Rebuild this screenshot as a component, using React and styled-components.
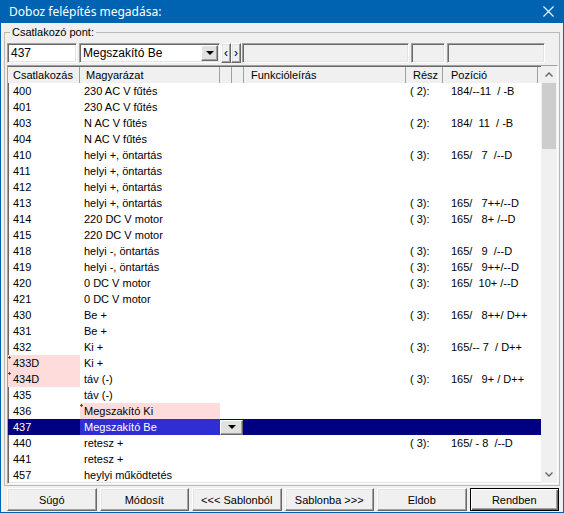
import styled, { createGlobalStyle } from "styled-components";

const GlobalStyle = createGlobalStyle`
  body {
    margin: 0;
    background: #f0f0f0;
  }
`;

const COLS = "72px 140px 12px 12px 162px 37px 95px";

const rows = [
  ["400", "230 AC V fűtés", "( 2):", "184/--11  / -B"],
  ["401", "230 AC V fűtés"],
  ["403", "N AC V fűtés", "( 2):", "184/  11  / -B"],
  ["404", "N AC V fűtés"],
  ["410", "helyi +, öntartás", "( 3):", "165/   7  /--D"],
  ["411", "helyi +, öntartás"],
  ["412", "helyi +, öntartás"],
  ["413", "helyi +, öntartás", "( 3):", "165/   7++/--D"],
  ["414", "220 DC V motor", "( 3):", "165/   8+ /--D"],
  ["415", "220 DC V motor"],
  ["418", "helyi -, öntartás", "( 3):", "165/   9  /--D"],
  ["419", "helyi -, öntartás", "( 3):", "165/   9++/--D"],
  ["420", "0 DC V motor", "( 3):", "165/  10+ /--D"],
  ["421", "0 DC V motor"],
  ["430", "Be +", "( 3):", "165/   8++/ D++"],
  ["431", "Be +"],
  ["432", "Ki +", "( 3):", "165/-- 7  / D++"],
  ["433D", "Ki +", "", "", { code: true }],
  ["434D", "táv (-)", "( 3):", "165/   9+ / D++", { code: true }],
  ["435", "táv (-)"],
  ["436", "Megszakító Ki", "", "", { name: true }],
  ["437", "Megszakító Be", "", "", { selected: true }],
  ["440", "retesz +", "( 3):", "165/ - 8  /--D"],
  ["441", "retesz +"],
  ["457", "heylyi működtetés"],
];

const Window = styled.div`
  width: 564px;
  height: 513px;
  box-sizing: border-box;
  border: 1px solid #0063b1;
  border-top: none;
  background: #f0f0f0;
  display: flex;
  flex-direction: column;
  font-family: "Liberation Sans", Arial, sans-serif;
  font-size: 11px;
  color: #000;
`;

const TitleBar = styled.div`
  height: 23px;
  margin: 0 -1px;
  background: #0063b1;
  color: #fff;
  display: flex;
  align-items: center;
  justify-content: space-between;
  padding: 0 10px 0 9px;
  font-family: "Noto Sans", "Liberation Sans", sans-serif;
  font-size: 12px;
`;

const Body = styled.div`
  flex: 1;
  display: flex;
  flex-direction: column;
  padding: 3px 3px 0 3px;
`;

const GroupBox = styled.fieldset`
  margin: 0;
  padding: 4px 1px 1px 2px;
  border: 1px solid #b9b9b9;
  min-width: 0;
`;

const Legend = styled.legend`
  margin-left: 3px;
  padding: 0 2px;
  line-height: 13px;
`;

const FieldRow = styled.div`
  display: flex;
  align-items: stretch;
  height: 20px;
  margin-bottom: 2px;
`;

const sunken = `
  box-sizing: border-box;
  border: 1px solid;
  border-color: #a0a0a0 #fff #fff #a0a0a0;
  box-shadow: inset 1px 1px 0 #696969, inset -1px -1px 0 #e3e3e3;
`;

const raised = `
  box-sizing: border-box;
  border: 1px solid;
  border-color: #fff #696969 #696969 #fff;
  box-shadow: inset -1px -1px 0 #a0a0a0, inset 1px 1px 0 #e3e3e3;
`;

const Field = styled.div`
  ${sunken}
  width: ${(p) => p.$w}px;
  margin-right: ${(p) => p.$gap ?? 2}px;
  background: ${(p) => (p.$blank ? "#f0f0f0" : "#fff")};
  display: flex;
  align-items: center;
  padding-left: 3px;
  font-size: 12px;
  position: relative;
`;

const ComboText = styled.span`
  flex: 1;
`;

const DropButton = styled.div`
  ${raised}
  width: ${(p) => p.$w || 17}px;
  height: ${(p) => p.$h || 16}px;
  background: #e1e1e1;
  display: flex;
  align-items: center;
  justify-content: center;
  margin-right: ${(p) => p.$mr ?? 1}px;
`;

const Arrow = styled.span`
  width: 0;
  height: 0;
  border-left: 4px solid transparent;
  border-right: 4px solid transparent;
  border-top: 4px solid #000;
`;

const NavButton = styled.div`
  ${raised}
  width: 10px;
  background: #f0f0f0;
  display: flex;
  align-items: center;
  justify-content: center;
  font-size: 12px;
  margin-right: ${(p) => p.$mr || 0}px;
`;

const Grid = styled.div`
  ${sunken}
  height: 419px;
  display: flex;
  background: #fff;
  overflow: hidden;
`;

const Table = styled.div`
  flex: 1;
  display: flex;
  flex-direction: column;
  overflow: hidden;
  padding-top: 1px;
`;

const HeaderRow = styled.div`
  display: grid;
  grid-template-columns: ${COLS};
  height: 16px;
  background: #f0f0f0;
`;

const HeadCell = styled.div`
  border-right: 1px solid #a0a0a0;
  padding-left: ${(p) => p.$pad || 5}px;
  line-height: 16px;
  white-space: nowrap;
  overflow: hidden;
`;

const Row = styled.div`
  display: grid;
  grid-template-columns: ${COLS};
  height: 16px;
  flex-shrink: 0;
  line-height: 16px;
  background: ${(p) => (p.$selected ? "#000080" : "transparent")};
  color: ${(p) => (p.$selected ? "#fff" : "#000")};
`;

const toneColor = { pink: "#ffdcdc", sel: "#2e2ed2" };

const Cell = styled.div`
  position: relative;
  padding-left: ${(p) => p.$pad ?? 5}px;
  white-space: pre;
  overflow: hidden;
  background: ${(p) => toneColor[p.$tone] || "transparent"};

  &::before {
    content: "";
    display: ${(p) => (p.$mark ? "block" : "none")};
    position: absolute;
    left: 0;
    top: 1px;
    width: 3px;
    height: 3px;
    background: linear-gradient(#e00000, #e00000) center / 1px 3px no-repeat,
      linear-gradient(#e00000, #e00000) center / 3px 1px no-repeat;
  }
`;

const CellButton = styled.div`
  display: flex;
  align-items: center;
  height: 16px;
`;

const Scrollbar = styled.div`
  width: 16px;
  display: flex;
  flex-direction: column;
  background: #f0f0f0;
`;

const ScrollArrow = styled.div`
  height: 17px;
  display: flex;
  align-items: center;
  justify-content: center;
`;

const Track = styled.div`
  flex: 1;
  padding: 0 1px;
`;

const Thumb = styled.div`
  height: 66px;
  background: #cdcdcd;
`;

const ButtonRow = styled.div`
  display: grid;
  grid-template-columns: repeat(6, 1fr);
  gap: 3px;
  padding: 2px 1px 0 3px;
`;

const Button = styled.button`
  ${raised}
  height: 23px;
  padding: 0;
  background: #f0f0f0;
  font-family: "Liberation Sans", Arial, sans-serif;
  font-size: 11px;
  color: #000;
  ${(p) =>
    p.$default &&
    `
    border-color: #000;
    box-shadow: inset 1px 1px 0 #fff, inset -1px -1px 0 #696969, inset -2px -2px 0 #a0a0a0;
  `}
`;

function Chevron({ down }) {
  return (
    <svg width="8" height="5" viewBox="0 0 8 5">
      <polyline
        points={down ? "0.5,0.5 4,4 7.5,0.5" : "0.5,4.5 4,1 7.5,4.5"}
        fill="none"
        stroke="#606060"
        strokeWidth="1.3"
      />
    </svg>
  );
}

function CloseIcon() {
  return (
    <svg width="11" height="11" viewBox="0 0 11 11">
      <path d="M0.5 0.5L10.5 10.5M10.5 0.5L0.5 10.5" stroke="#fff" strokeWidth="1.1" />
    </svg>
  );
}

function DataRow({ code, name, resz = "", pos = "", flags = {} }) {
  const sel = flags.selected;
  return (
    <Row $selected={sel}>
      <Cell $tone={flags.code ? "pink" : undefined} $mark={flags.code}>
        {code}
      </Cell>
      <Cell
        $pad={4}
        $tone={flags.name ? "pink" : sel ? "sel" : undefined}
        $mark={flags.name || sel}
      >
        {name}
      </Cell>
      <Cell $pad={0} style={{ gridColumn: sel ? "span 2" : undefined }}>
        {sel && (
          <CellButton>
            <DropButton $w={23} $h={15} $mr={0}>
              <Arrow />
            </DropButton>
          </CellButton>
        )}
      </Cell>
      {!sel && <Cell />}
      <Cell />
      <Cell $pad={4}>{resz}</Cell>
      <Cell $pad={8}>{pos}</Cell>
    </Row>
  );
}

export default function App() {
  return (
    <>
      <GlobalStyle />
      <Window>
        <TitleBar>
          <span>Doboz felépítés megadása:</span>
          <CloseIcon />
        </TitleBar>
        <Body>
          <GroupBox>
            <Legend>Csatlakozó pont:</Legend>
            <FieldRow>
              <Field $w={70}>437</Field>
              <Field $w={141} $gap={1}>
                <ComboText>Megszakító Be</ComboText>
                <DropButton>
                  <Arrow />
                </DropButton>
              </Field>
              <NavButton>‹</NavButton>
              <NavButton $mr={1}>›</NavButton>
              <Field $w={167} $blank />
              <Field $w={34} $blank />
              <Field $w={98} $blank />
            </FieldRow>
            <Grid>
              <Table>
                <HeaderRow>
                  <HeadCell>Csatlakozás</HeadCell>
                  <HeadCell $pad={6}>Magyarázat</HeadCell>
                  <HeadCell />
                  <HeadCell />
                  <HeadCell $pad={7}>Funkcióleírás</HeadCell>
                  <HeadCell $pad={7}>Rész</HeadCell>
                  <HeadCell $pad={8}>Pozíció</HeadCell>
                </HeaderRow>
                {rows.map(([code, name, resz, pos, flags]) => (
                  <DataRow
                    key={code}
                    code={code}
                    name={name}
                    resz={resz}
                    pos={pos}
                    flags={flags}
                  />
                ))}
              </Table>
              <Scrollbar>
                <ScrollArrow>
                  <Chevron />
                </ScrollArrow>
                <Track>
                  <Thumb />
                </Track>
                <ScrollArrow>
                  <Chevron down />
                </ScrollArrow>
              </Scrollbar>
            </Grid>
          </GroupBox>
          <ButtonRow>
            <Button>Súgó</Button>
            <Button>Módosít</Button>
            <Button>&lt;&lt;&lt; Sablonból</Button>
            <Button>Sablonba &gt;&gt;&gt;</Button>
            <Button>Eldob</Button>
            <Button $default>Rendben</Button>
          </ButtonRow>
        </Body>
      </Window>
    </>
  );
}
